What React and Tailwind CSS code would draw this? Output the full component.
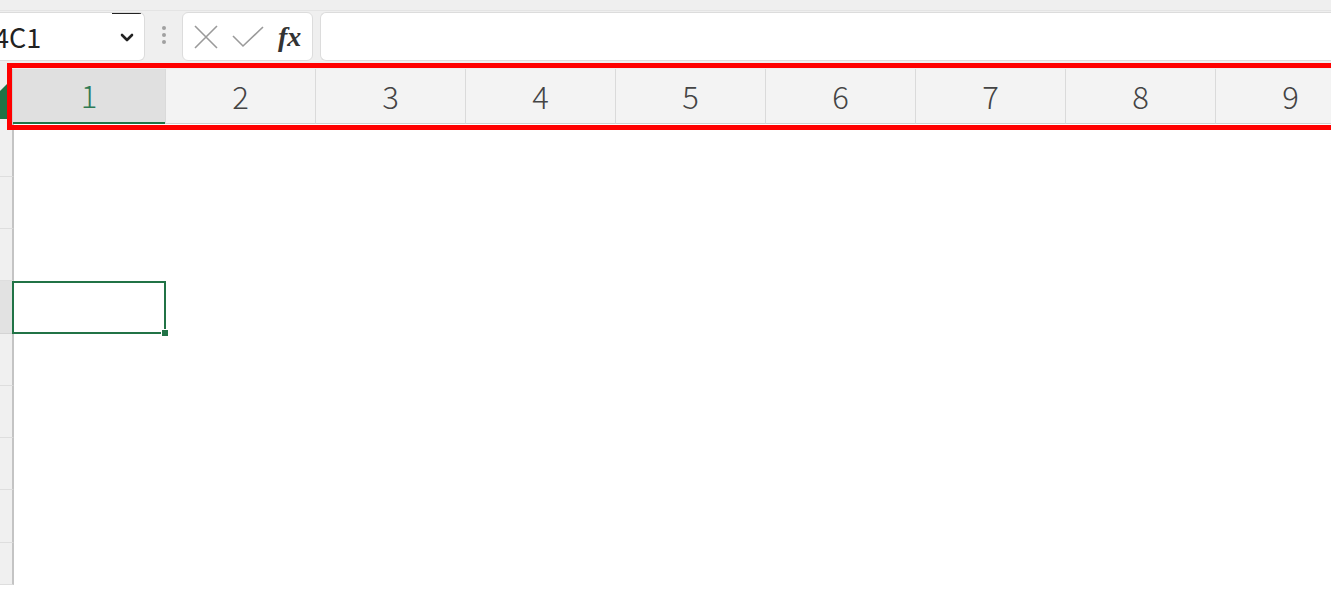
import React from 'react';

const COLS = [1, 2, 3, 4, 5, 6, 7, 8, 9];
const ROWS = [53, 52, 52, 53, 52, 52, 52, 53, 42];
const SELECTED_ROW = 3;

const NameBox = () => (
  <div className="relative flex h-[49px] w-[145px] shrink-0 items-center overflow-hidden rounded-r-md border border-l-0 border-[#dcdcdc] bg-white">
    <div className="absolute right-[3px] top-0 h-[1px] w-[29px] bg-[#222]" />
    <span className="ml-[-6px] text-[27px] leading-none text-[#222]">4C1</span>
    <svg className="absolute right-[10px] top-[20px]" width="14" height="10" viewBox="0 0 14 10">
      <path d="M2 2 L7 7 L12 2" fill="none" stroke="#222" strokeWidth="2.6" strokeLinecap="round" strokeLinejoin="round" />
    </svg>
  </div>
);

const FormulaControls = () => (
  <div className="flex h-[49px] w-[131px] items-center rounded-md border border-[#dcdcdc] bg-white">
    <svg className="ml-[10px]" width="26" height="26" viewBox="0 0 26 26">
      <path d="M2 2 L24 24 M24 2 L2 24" stroke="#9a9a9a" strokeWidth="1.6" />
    </svg>
    <svg className="ml-[13px]" width="32" height="26" viewBox="0 0 32 26">
      <path d="M1 12 L11 22 L31 3" fill="none" stroke="#9a9a9a" strokeWidth="1.6" />
    </svg>
    <span className="ml-[14px] text-[28px] italic font-bold leading-none text-[#333]" style={{ fontFamily: '"Liberation Serif", serif' }}>
      fx
    </span>
  </div>
);

const App = () => {
  return (
    <div className="relative h-[591px] w-[1331px] overflow-hidden bg-white" style={{ fontFamily: '"Noto Sans CJK JP", "Noto Sans", sans-serif' }}>
      {/* toolbar */}
      <div className="h-[62px] bg-[#efefef] pt-[10px]">
        <div className="flex h-[52px] items-start border-t border-[#e4e4e4] pt-[1px]">
          <NameBox />
          <div className="ml-[16px] mt-[14px] flex w-[5px] shrink-0 flex-col items-center gap-[3px]">
            <div className="h-[4px] w-[4px] rounded-full bg-[#a0a0a0]" />
            <div className="h-[4px] w-[4px] rounded-full bg-[#a0a0a0]" />
            <div className="h-[4px] w-[4px] rounded-full bg-[#a0a0a0]" />
          </div>
          <div className="ml-[16px] shrink-0">
            <FormulaControls />
          </div>
          <div className="ml-[7px] h-[49px] flex-1 rounded-l-md border border-r-0 border-[#dcdcdc] bg-white" />
        </div>
      </div>

      {/* column header */}
      <div className="flex h-[62px] bg-[#efefef] pt-[7px]">
        <div className="relative w-[13px] shrink-0 border-r border-[#cfcfcf]">
          <svg className="absolute left-0 top-[14px]" width="8" height="36" viewBox="0 0 8 36">
            <path d="M8 0 L8 36 L0 36 L0 8 Z" fill="#217346" />
          </svg>
        </div>
        {COLS.map((c, i) => (
          <div
            key={c}
            className={
              i === 0
                ? 'flex w-[152px] shrink-0 items-center justify-center border-b-2 border-[#217346] bg-[#e0e0e0] text-[31px] font-light text-[#2f7a55]'
                : 'flex w-[150px] shrink-0 items-center justify-center border-b border-l border-[#dadada] border-b-[#d0d0d0] bg-[#f3f3f3] text-[31px] font-light text-[#444]'
            }
          >
            {c}
          </div>
        ))}
      </div>

      {/* grid body */}
      <div className="flex flex-col">
        {ROWS.map((h, r) => (
          <div key={r} className="flex" style={{ height: h }}>
            <div
              className={
                r === SELECTED_ROW
                  ? 'w-[14px] shrink-0 border-b border-r-2 border-[#d4d4d4] border-r-[#c4c4c4] bg-[#e2e2e2]'
                  : 'w-[14px] shrink-0 border-b border-r-2 border-[#dedede] border-r-[#c4c4c4] bg-[#f0f0f0]'
              }
            />
            {r === SELECTED_ROW && (
              <div className="relative -ml-[2px] w-[154px] shrink-0 border-2 border-[#217346]">
                <div className="absolute -bottom-[5px] -right-[5px] h-[8px] w-[8px] border border-white bg-[#217346]" />
              </div>
            )}
          </div>
        ))}
      </div>

      {/* annotation */}
      <div className="absolute left-[7px] top-[63px] h-[67px] w-[1340px] border-[5px] border-[#ff0000]" />
    </div>
  );
};

export default App;
